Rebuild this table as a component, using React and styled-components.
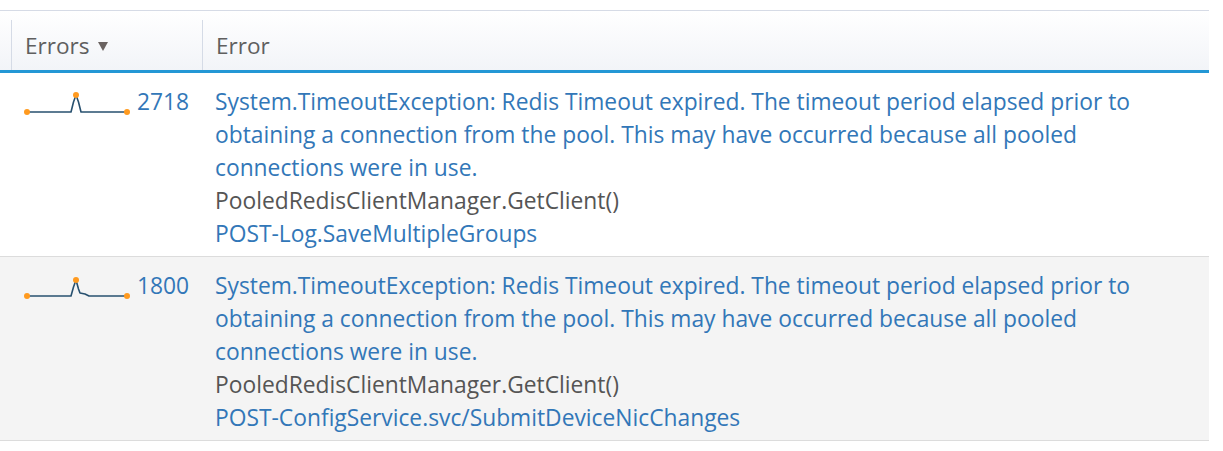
import React from 'react';
import styled, { createGlobalStyle } from 'styled-components';

const GlobalStyle = createGlobalStyle`
  body {
    margin: 0;
    background: #fff;
    font-family: "Open Sans", "Noto Sans", "Liberation Sans", sans-serif;
  }
`;

const Page = styled.div`
  padding-top: 10px;
`;

const Table = styled.div`
  width: 1209px;
  border-top: 1px solid #d6dbe6;
`;

const HeaderRow = styled.div`
  display: grid;
  grid-template-columns: 11px 191px 1fr;
  height: 59px;
  background: linear-gradient(#ffffff, #f2f4f8);
  border-bottom: 3px solid #2397d5;
  box-sizing: content-box;
`;

const HeadCell = styled.div`
  margin-top: 9px;
  display: flex;
  align-items: center;
  gap: 8px;
  padding-left: 13px;
  border-left: ${p => (p.$edge ? 'none' : '1px solid #d5dbe6')};
  color: #5f5f5f;
  font-size: 22.6px;
`;

const SortArrow = styled.span`
  width: 0;
  height: 0;
  margin-top: 2px;
  border-left: 5px solid transparent;
  border-right: 5px solid transparent;
  border-top: 9px solid #6b6361;
`;

const Row = styled.div`
  display: grid;
  grid-template-columns: 11px 191px 1fr;
  background: ${p => (p.$alt ? '#f4f4f4' : '#fff')};
  border-bottom: 1px solid #dcdcdc;
  padding: 12px 0 6px;
  line-height: 33px;
  font-size: 22.8px;
`;

const CountCell = styled.div`
  display: flex;
  align-items: flex-start;
  gap: 6px;
  padding-left: 12px;
  height: 33px;
`;

const Spark = styled.svg`
  flex: none;
  margin-top: 3px;
`;

const Count = styled.span`
  color: #3277b8;
`;

const ErrorCell = styled.div`
  padding-left: 13px;
  padding-right: 30px;
  display: flex;
  flex-direction: column;
`;

const Message = styled.span`
  color: #3277b8;
`;

const Method = styled.span`
  color: #555555;
`;

const Route = styled.span`
  color: #3277b8;
`;

function Sparkline({ points }) {
  const d = points.map((pt, i) => `${i ? 'L' : 'M'}${pt[0]} ${pt[1]}`).join(' ');
  const first = points[0];
  const last = points[points.length - 1];
  const peak = points.reduce((a, b) => (b[1] < a[1] ? b : a));
  return (
    <Spark width="108" height="28" viewBox="0 0 108 28">
      <path d={d} fill="none" stroke="#27506f" strokeWidth="1.6" strokeLinejoin="round" />
      {[first, peak, last].map((pt, i) => (
        <circle key={i} cx={pt[0]} cy={pt[1]} r="3" fill="#ff9a1f" />
      ))}
    </Spark>
  );
}

const message =
  'System.TimeoutException: Redis Timeout expired. The timeout period elapsed prior to obtaining a connection from the pool. This may have occurred because all pooled connections were in use.';

const rows = [
  {
    count: 2718,
    route: 'POST-Log.SaveMultipleGroups',
    points: [[4, 24], [48, 24], [50.5, 14], [53, 7], [55.5, 14], [58, 24], [104, 24]],
  },
  {
    count: 1800,
    route: 'POST-ConfigService.svc/SubmitDeviceNicChanges',
    points: [[4, 24], [48, 24], [50.5, 15], [53, 8], [55.5, 17], [57, 21], [62, 22], [66, 24], [104, 24]],
  },
];

export default function App() {
  return (
    <Page>
      <GlobalStyle />
      <Table>
        <HeaderRow>
          <HeadCell $edge />
          <HeadCell>
            Errors <SortArrow />
          </HeadCell>
          <HeadCell>Error</HeadCell>
        </HeaderRow>
        {rows.map((r, i) => (
          <Row key={r.count} $alt={i % 2 === 1}>
            <div />
            <CountCell>
              <Sparkline points={r.points} />
              <Count>{r.count}</Count>
            </CountCell>
            <ErrorCell>
              <Message>{message}</Message>
              <Method>PooledRedisClientManager.GetClient()</Method>
              <Route>{r.route}</Route>
            </ErrorCell>
          </Row>
        ))}
      </Table>
    </Page>
  );
}
